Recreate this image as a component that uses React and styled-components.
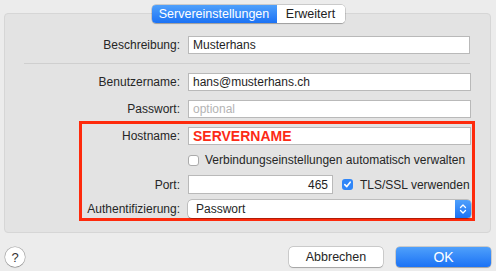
import React from 'react';
import styled, { createGlobalStyle } from 'styled-components';

const GlobalStyle = createGlobalStyle`
  html, body {
    margin: 0;
    padding: 0;
    background: #ececec;
  }
  body {
    font-family: 'Liberation Sans', Arial, sans-serif;
    font-size: 12px;
    color: #262626;
  }
`;

const Window = styled.div`
  width: 496px;
  height: 271px;
  display: flex;
  flex-direction: column;
  box-sizing: border-box;
  padding: 5px 5px 0 4px;
`;

const Tabs = styled.div`
  position: relative;
  z-index: 1;
  align-self: center;
  display: flex;
  margin-left: 1px;
  margin-bottom: -10px;
  height: 18px;
  border-radius: 4px;
  background: #fff;
  box-shadow: 0 0 0 0.5px rgba(0, 0, 0, 0.25), 0 0.5px 1px rgba(0, 0, 0, 0.2);
  overflow: hidden;
`;

const Tab = styled.div`
  display: flex;
  align-items: center;
  justify-content: center;
  width: ${(p) => p.$w}px;
  font-size: 12.5px;
  color: ${(p) => (p.$active ? '#fff' : '#222')};
  background: ${(p) => (p.$active ? 'linear-gradient(#4fa0fb, #1b72f5)' : '#fff')};
`;

const Panel = styled.div`
  height: 220px;
  box-sizing: border-box;
  border: 1px solid #d6d6d6;
  border-radius: 4px;
  background: #e3e3e3;
  padding: 22px 19px 0 0;
  display: flex;
  flex-direction: column;
  gap: 9px;
`;

const Row = styled.div`
  display: grid;
  grid-template-columns: 1fr 283px;
  column-gap: 8px;
  align-items: center;
  height: ${(p) => p.$h || 18}px;
`;

const Label = styled.div`
  text-align: right;
  white-space: nowrap;
`;

const Field = styled.div`
  height: ${(p) => p.$h || 18}px;
  box-sizing: border-box;
  background: #fff;
  border: 1px solid #b9b9b9;
  display: flex;
  align-items: center;
  justify-content: ${(p) => (p.$right ? 'flex-end' : 'flex-start')};
  padding: 0 4px;
  margin-right: ${(p) => p.$mr || 0}px;
  color: ${(p) => (p.$placeholder ? '#b4b4b4' : '#1e1e1e')};
  width: ${(p) => (p.$w ? `${p.$w}px` : 'auto')};
  white-space: nowrap;
`;

const HostText = styled.span`
  color: #fc2a16;
  font-weight: bold;
  font-size: 14px;
`;

const Separator = styled.div`
  height: 1px;
  background: #cfcfcf;
  margin-left: 19px;
  margin-right: 1px;
`;

const Highlight = styled.div`
  border: 3px solid #fe2a0c;
  margin: -6px -4px 0 74px;
  padding: 3px 1px 0 0;
  display: flex;
  flex-direction: column;
  gap: 6px;
`;

const Inline = styled.div`
  display: flex;
  align-items: center;
  gap: ${(p) => p.$gap || 6}px;
  white-space: nowrap;
`;

const Check = styled.span`
  width: 11px;
  height: 11px;
  box-sizing: border-box;
  border-radius: 3px;
  flex: none;
  display: flex;
  align-items: center;
  justify-content: center;
  background: ${(p) => (p.$on ? '#2f86f8' : '#fff')};
  border: ${(p) => (p.$on ? 'none' : '1px solid #ababab')};
`;

const Popup = styled.div`
  height: 18px;
  box-sizing: border-box;
  display: flex;
  background: #fff;
  border-radius: 4px;
  box-shadow: 0 0 0 0.5px rgba(0, 0, 0, 0.3), 0 0.5px 1px rgba(0, 0, 0, 0.2);
  overflow: hidden;
`;

const PopupText = styled.div`
  flex: 1;
  display: flex;
  align-items: center;
  padding-left: 8px;
`;

const Stepper = styled.div`
  width: 16px;
  display: flex;
  align-items: center;
  justify-content: center;
  background: linear-gradient(#4fa0fb, #1b72f5);
`;

const Footer = styled.div`
  display: flex;
  align-items: center;
  padding-top: 14px;
  padding-left: 1px;
`;

const HelpButton = styled.div`
  width: 20px;
  height: 20px;
  border-radius: 50%;
  background: #fff;
  box-shadow: 0 0 0 0.5px rgba(0, 0, 0, 0.3), 0 0.5px 1px rgba(0, 0, 0, 0.25);
  display: flex;
  align-items: center;
  justify-content: center;
  font-size: 13px;
  color: #333;
`;

const Spacer = styled.div`
  flex: 1;
`;

const Button = styled.div`
  width: ${(p) => p.$w}px;
  height: 20px;
  border-radius: 4px;
  display: flex;
  align-items: center;
  justify-content: center;
  margin-left: ${(p) => p.$ml || 0}px;
  font-size: ${(p) => (p.$primary ? 14 : 12.5)}px;
  color: ${(p) => (p.$primary ? '#fff' : '#262626')};
  background: ${(p) => (p.$primary ? 'linear-gradient(#4fa0fb, #1b72f5)' : '#fff')};
  box-shadow: 0 0 0 0.5px rgba(0, 0, 0, 0.25), 0 0.5px 1px rgba(0, 0, 0, 0.2);
`;

const CheckMark = () => (
  <svg width="9" height="9" viewBox="0 0 9 9">
    <path d="M1.8 4.6 L3.8 6.6 L7.2 2.2" fill="none" stroke="#fff" strokeWidth="1.6" strokeLinecap="round" strokeLinejoin="round" />
  </svg>
);

const Chevrons = () => (
  <svg width="8" height="12" viewBox="0 0 8 12">
    <path d="M1.5 4.5 L4 2 L6.5 4.5 M1.5 7.5 L4 10 L6.5 7.5" fill="none" stroke="#fff" strokeWidth="1.3" strokeLinecap="round" strokeLinejoin="round" />
  </svg>
);

export default function App() {
  return (
    <>
      <GlobalStyle />
      <Window>
        <Tabs>
          <Tab $active $w={125}>Servereinstellungen</Tab>
          <Tab $w={68}>Erweitert</Tab>
        </Tabs>
        <Panel>
          <Row>
            <Label>Beschreibung:</Label>
            <Field $mr={1}>Musterhans</Field>
          </Row>
          <Separator />
          <Row>
            <Label>Benutzername:</Label>
            <Field>hans@musterhans.ch</Field>
          </Row>
          <Row>
            <Label>Passwort:</Label>
            <Field $placeholder>optional</Field>
          </Row>
          <Highlight>
            <Row>
              <Label>Hostname:</Label>
              <Field>
                <HostText>SERVERNAME</HostText>
              </Field>
            </Row>
            <Row>
              <span />
              <Inline>
                <Check />
                <span>Verbindungseinstellungen automatisch verwalten</span>
              </Inline>
            </Row>
            <Row $h={19}>
              <Label>Port:</Label>
              <Inline $gap={9}>
                <Field $right $w={145} $h={19}>465</Field>
                <Check $on>
                  <CheckMark />
                </Check>
                <span style={{ marginLeft: -2 }}>TLS/SSL verwenden</span>
              </Inline>
            </Row>
            <Row>
              <Label>Authentifizierung:</Label>
              <Popup>
                <PopupText>Passwort</PopupText>
                <Stepper>
                  <Chevrons />
                </Stepper>
              </Popup>
            </Row>
          </Highlight>
        </Panel>
        <Footer>
          <HelpButton>?</HelpButton>
          <Spacer />
          <Button $w={94}>Abbrechen</Button>
          <Button $w={95} $ml={13} $primary>OK</Button>
        </Footer>
      </Window>
    </>
  );
}
